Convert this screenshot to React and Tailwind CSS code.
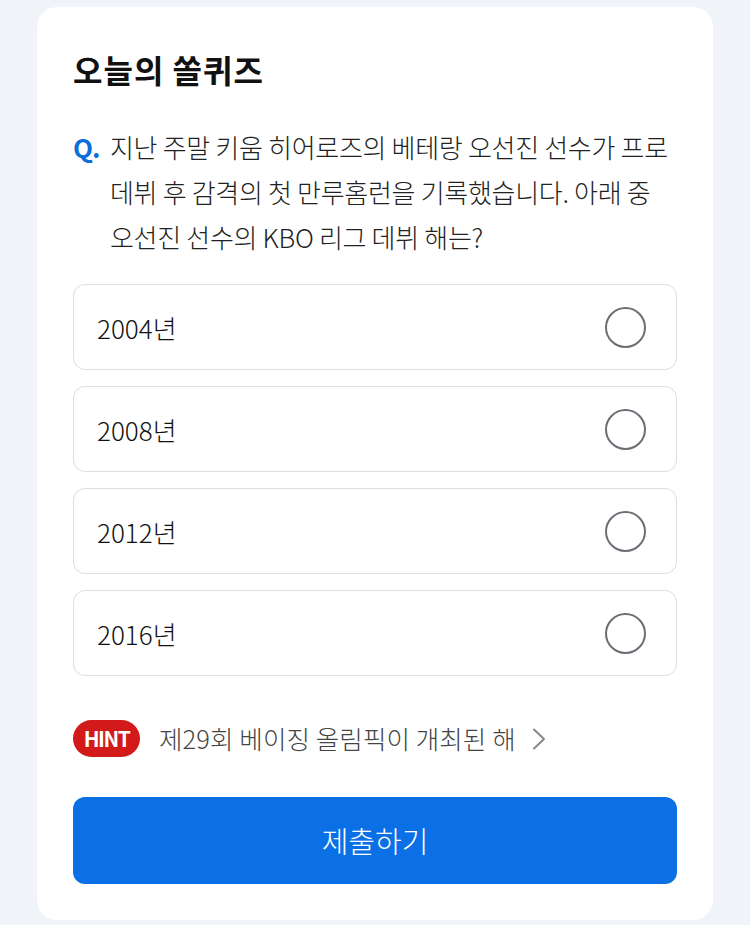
const options = ["2004년", "2008년", "2012년", "2016년"];

export default function App() {
  return (
    <div
      className="min-h-[925px] w-[750px] bg-[#f0f3f8] pt-[7px]"
      style={{ fontFamily: '"Noto Sans CJK KR", "Noto Sans", sans-serif' }}
    >
      <div className="mx-[37px] w-[676px] rounded-[20px] bg-white px-[36px] pb-[36px] pt-[41px]">
        <h1 className="text-[32px] font-bold leading-[42px] tracking-[1px] text-[#111]">
          오늘의 쏠퀴즈
        </h1>

        <div className="mt-[34px] flex text-[26px] font-light leading-[45px] tracking-[-0.3px] text-[#222]">
          <span className="w-[37px] shrink-0 font-bold tracking-[-1px] text-[#0a6fd8]">Q.</span>
          <p className="whitespace-nowrap">
            지난 주말 키움 히어로즈의 베테랑 오선진 선수가 프로
            <br />
            데뷔 후 감격의 첫 만루홈런을 기록했습니다. 아래 중
            <br />
            오선진 선수의 KBO 리그 데뷔 해는?
          </p>
        </div>

        <div className="mt-[25px] flex flex-col gap-[16px]">
          {options.map((option) => (
            <button
              key={option}
              type="button"
              className="flex h-[86px] items-center justify-between rounded-[12px] border border-[#dcdde0] bg-white pl-[23px] pr-[30px] text-left"
            >
              <span className="text-[26px] font-light text-[#111]">{option}</span>
              <span className="h-[41px] w-[41px] rounded-full border-2 border-[#6b6e74]" />
            </button>
          ))}
        </div>

        <div className="mt-[44px] flex h-[37px] items-center">
          <span className="flex h-[37px] w-[67px] items-center justify-center rounded-full bg-[#d21a1a] text-[21px] font-bold tracking-[-1.5px] text-white">
            HINT
          </span>
          <span className="ml-[19px] text-[25.5px] font-light tracking-[0.1px] text-[#444]">
            제29회 베이징 올림픽이 개최된 해
          </span>
          <svg className="ml-[16px]" width="14" height="22" viewBox="0 0 14 22" fill="none">
            <polyline points="2,1.5 12,11 2,20.5" stroke="#888" strokeWidth="2" strokeLinecap="round" strokeLinejoin="round" />
          </svg>
        </div>

        <button
          type="button"
          className="mt-[40px] flex h-[87px] w-full items-center justify-center rounded-[12px] bg-[#0b70e6] text-[29px] font-light text-white"
        >
          제출하기
        </button>
      </div>
    </div>
  );
}
